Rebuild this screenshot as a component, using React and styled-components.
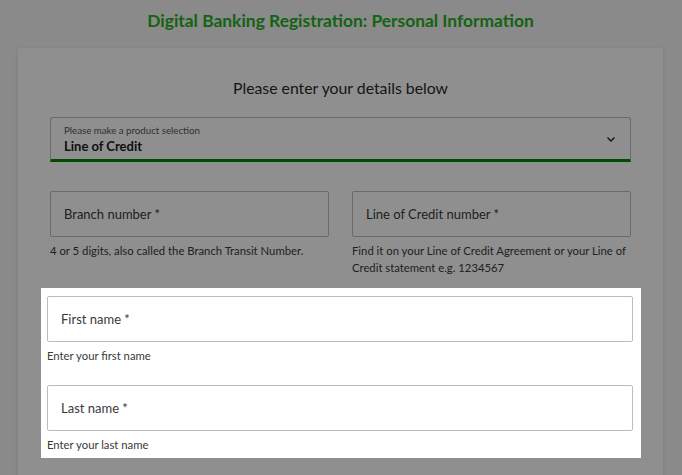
import React from "react";
import styled, { createGlobalStyle } from "styled-components";

const GlobalStyle = createGlobalStyle`
  html, body {
    margin: 0;
    padding: 0;
    background: #f6f6f6;
    font-family: "Lato", "Noto Sans", sans-serif;
    color: #333;
  }
  * { box-sizing: border-box; }
`;

const Page = styled.div`
  position: relative;
  width: 682px;
  height: 475px;
  overflow: hidden;
  padding: 0 19px 0 18px;
`;

const Title = styled.h1`
  margin: 0;
  padding-top: 10px;
  height: 48px;
  text-align: center;
  font-size: 17.4px;
  font-weight: 700;
  color: #23b023;
`;

const Card = styled.main`
  background: #fff;
  box-shadow: 0 1px 4px rgba(0, 0, 0, 0.12);
  padding: 30px 32px 40px;
`;

const Lead = styled.h2`
  margin: 0 0 20px;
  text-align: center;
  font-size: 15.8px;
  font-weight: 400;
  color: #2a2a2a;
`;

const Select = styled.div`
  height: 45px;
  border: 1px solid #bdbdbd;
  border-bottom: 3px solid #008a00;
  border-radius: 3px 3px 0 0;
  padding: 1px 13px 0;
  display: flex;
  align-items: center;
  justify-content: space-between;
`;

const SelectText = styled.div`
  display: flex;
  flex-direction: column;
  gap: 2px;
`;

const SmallLabel = styled.span`
  font-size: 9.7px;
  color: #555;
  line-height: 11px;
`;

const Value = styled.span`
  font-size: 13px;
  font-weight: 700;
  color: #1a1a1a;
`;

const Chevron = styled.svg`
  width: 10px;
  height: 10px;
  margin-top: 0;
  margin-right: 1px;
`;

const Row = styled.div`
  display: grid;
  grid-template-columns: 1fr 1fr;
  gap: 23px;
  margin-top: 29px;
`;

const Field = styled.div`
  display: flex;
  flex-direction: column;
`;

const Input = styled.div`
  height: 46px;
  border: 1px solid #bdbdbd;
  border-radius: 2px;
  display: flex;
  align-items: center;
  padding-left: 13px;
  font-size: 13px;
  color: #3a3a3a;
  background: #fff;
`;

const Help = styled.p`
  margin: 5px 0 0;
  font-size: 11.3px;
  line-height: 17px;
  color: #3a3a3a;
`;

const Overlay = styled.div`
  position: absolute;
  inset: 0;
  background: rgba(0, 0, 0, 0.44);
  z-index: 1;
`;

const Spotlight = styled.section`
  position: relative;
  z-index: 2;
  background: #fff;
  margin: 12px -10px 0 -9px;
  padding: 8px 8px 5px 6px;
  display: flex;
  flex-direction: column;
  gap: 21px;
`;

export default function App() {
  return (
    <>
      <GlobalStyle />
      <Page>
        <Title>Digital Banking Registration: Personal Information</Title>
        <Card>
          <Lead>Please enter your details below</Lead>
          <Select>
            <SelectText>
              <SmallLabel>Please make a product selection</SmallLabel>
              <Value>Line of Credit</Value>
            </SelectText>
            <Chevron viewBox="0 0 10 10">
              <path d="M1.5 3.5 L5 7 L8.5 3.5" fill="none" stroke="#222" strokeWidth="1.4" />
            </Chevron>
          </Select>
          <Row>
            <Field>
              <Input>Branch number *</Input>
              <Help>4 or 5 digits, also called the Branch Transit Number.</Help>
            </Field>
            <Field>
              <Input>Line of Credit number *</Input>
              <Help>
                Find it on your Line of Credit Agreement or your Line of Credit
                statement e.g. 1234567
              </Help>
            </Field>
          </Row>
          <Spotlight>
            <Field>
              <Input>First name *</Input>
              <Help>Enter your first name</Help>
            </Field>
            <Field>
              <Input>Last name *</Input>
              <Help>Enter your last name</Help>
            </Field>
          </Spotlight>
        </Card>
        <Overlay />
      </Page>
    </>
  );
}
